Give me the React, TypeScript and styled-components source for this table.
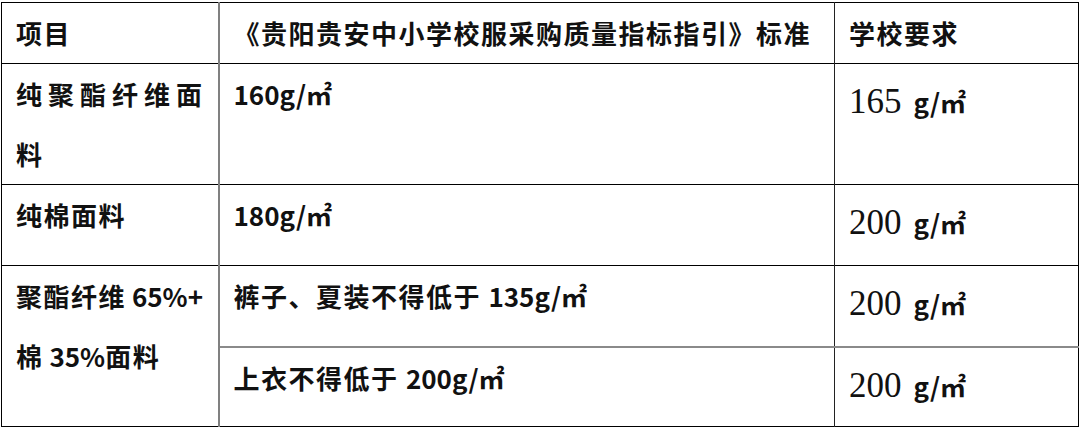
import React from "react";
import styled, { createGlobalStyle } from "styled-components";

const GlobalStyle = createGlobalStyle`
  body {
    margin: 0;
    background: #ffffff;
  }
`;

const Page = styled.div`
  padding: 2px 2px 0 1px;
  font-family: "Noto Sans CJK SC", "Noto Sans", sans-serif;
  color: #111;
`;

const Table = styled.table`
  width: 1077px;
  border-collapse: collapse;
  table-layout: fixed;
  border: 1px solid #000;
`;

const Row = styled.tr<{ $h: number }>`
  height: ${(p) => p.$h}px;
`;

const Cell = styled.td<{ $col: number; $split?: boolean; $justify?: boolean }>`
  padding: 0 14px;
  vertical-align: top;
  font-size: 26px;
  font-weight: 700;
  line-height: 60px;
  letter-spacing: 1.5px;
  text-align: ${(p) => (p.$justify ? "justify" : "left")};
  border-top: ${(p) => (p.$split ? "2px solid #8a8a8a" : "1px solid #000")};
  border-right: ${(p) =>
    p.$col === 1 ? "2px solid #808080" : p.$col === 2 ? "1px solid #222" : "1px solid #000"};
`;

const HeadCell = styled(Cell)`
  vertical-align: middle;
  line-height: 40px;
  white-space: nowrap;
`;

const Value = styled(Cell)`
  padding-top: 13px;
  line-height: 50px;
`;

const Line = styled.span`
  display: block;
  white-space: nowrap;
  letter-spacing: 0;
`;

const Wide = styled.span`
  letter-spacing: 1.5px;
`;

const Latin = styled.span`
  letter-spacing: 0;
`;

const Num = styled.span`
  font-family: "Liberation Serif", "Times New Roman", serif;
  font-weight: 400;
  font-size: 35px;
  letter-spacing: 0;
  margin-right: 12px;
`;

const Unit = styled.span`
  font-size: 26px;
  letter-spacing: 0;
`;

const Amount = ({ n }: { n: string }) => (
  <>
    <Num>{n}</Num>
    <Unit>g/㎡</Unit>
  </>
);

export default function App() {
  return (
    <Page>
      <GlobalStyle />
      <Table>
        <colgroup>
          <col style={{ width: 217 }} />
          <col style={{ width: 616 }} />
          <col style={{ width: 244 }} />
        </colgroup>
        <tbody>
          <Row $h={61}>
            <HeadCell $col={1}>项目</HeadCell>
            <HeadCell $col={2}>《贵阳贵安中小学校服采购质量指标指引》标准</HeadCell>
            <HeadCell $col={3}>学校要求</HeadCell>
          </Row>
          <Row $h={121}>
            <Cell $col={1} $justify>
              纯聚酯纤维面料
            </Cell>
            <Cell $col={2}>
              <Latin>160g/</Latin>㎡
            </Cell>
            <Value $col={3}>
              <Amount n="165" />
            </Value>
          </Row>
          <Row $h={81}>
            <Cell $col={1}>纯棉面料</Cell>
            <Cell $col={2}>
              <Latin>180g/</Latin>㎡
            </Cell>
            <Value $col={3}>
              <Amount n="200" />
            </Value>
          </Row>
          <Row $h={81}>
            <Cell $col={1} rowSpan={2}>
              <Line>
                <Wide>聚酯纤维</Wide> 65%+
              </Line>
              <Line>
                <Wide>棉</Wide> 35%<Wide>面料</Wide>
              </Line>
            </Cell>
            <Cell $col={2}>
              裤子、夏装不得低于 <Latin>135g/</Latin>㎡
            </Cell>
            <Value $col={3}>
              <Amount n="200" />
            </Value>
          </Row>
          <Row $h={80}>
            <Cell $col={2} $split>
              上衣不得低于 <Latin>200g/</Latin>㎡
            </Cell>
            <Value $col={3} $split>
              <Amount n="200" />
            </Value>
          </Row>
        </tbody>
      </Table>
    </Page>
  );
}
